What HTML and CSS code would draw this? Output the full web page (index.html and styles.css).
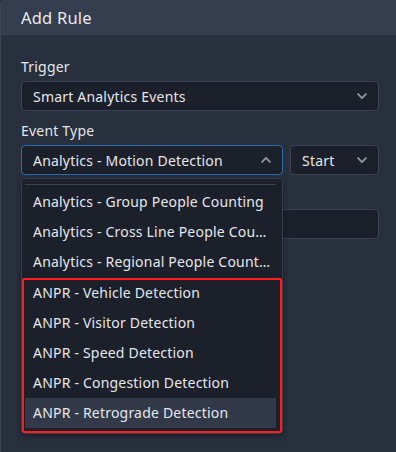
FILE: index.html
```html
<!DOCTYPE html>
<html lang="en">
<head>
  <meta charset="UTF-8" />
  <meta name="viewport" content="width=device-width, initial-scale=1.0" />
  <title>Add Rule</title>
  <link rel="stylesheet" href="styles.css">
</head>
<body>
  <div class="panel">
    <div class="panel-header">Add Rule</div>
    <div class="panel-body">
      <div class="field">
        <label class="field-label">Trigger</label>
        <div class="select">
          <span>Smart Analytics Events</span>
          <svg class="chevron" width="12" height="8" viewBox="0 0 12 8"><path d="M1.5 1.5 L6 6 L10.5 1.5" fill="none" stroke="#9aa2ae" stroke-width="1.6"/></svg>
        </div>
      </div>

      <div class="field">
        <label class="field-label">Event Type</label>
        <div class="select-row">
          <div class="select-wrap">
            <div class="select open">
              <span>Analytics - Motion Detection</span>
              <svg class="chevron" width="12" height="8" viewBox="0 0 12 8"><path d="M1.5 6.5 L6 2 L10.5 6.5" fill="none" stroke="#9aa2ae" stroke-width="1.6"/></svg>
            </div>
            <div class="dropdown">
              <div class="dropdown-list">
                <div class="option">Analytics - Group People Counting</div>
                <div class="option">Analytics - Cross Line People Counting</div>
                <div class="option">Analytics - Regional People Counting</div>
                <div class="option gap">ANPR - Vehicle Detection</div>
                <div class="option">ANPR - Visitor Detection</div>
                <div class="option">ANPR - Speed Detection</div>
                <div class="option">ANPR - Congestion Detection</div>
                <div class="option active">ANPR - Retrograde Detection</div>
              </div>
              <div class="highlight-box"></div>
            </div>
          </div>
          <div class="select small">
            <span>Start</span>
            <svg class="chevron" width="12" height="8" viewBox="0 0 12 8"><path d="M1.5 1.5 L6 6 L10.5 1.5" fill="none" stroke="#9aa2ae" stroke-width="1.6"/></svg>
          </div>
        </div>
      </div>

      <div class="field">
        <label class="field-label">&nbsp;</label>
        <input class="input" type="text" />
      </div>
    </div>
  </div>
</body>
</html>
```

FILE: styles.css
```css
body {
  margin: 0;
  font-family: 'Noto Sans', 'Open Sans', sans-serif;
  font-size: 14px;
  letter-spacing: 0.2px;
  color: #e4e7ec;
  background: #282f3d;
}

.panel {
  height: 452px;
  background: #282f3d;
  border-left: 1px solid #3a4352;
  border-top-left-radius: 4px;
  overflow: hidden;
}

.panel-header {
  height: 35px;
  line-height: 36px;
  padding-left: 20px;
  font-size: 16.5px;
  background: #343e4e;
  color: #e8ebef;
}

.panel-body {
  padding: 22px 17px 0 20px;
}

.field + .field {
  margin-top: 10px;
}

.field-label {
  display: block;
  height: 20px;
  line-height: 20px;
  margin-bottom: 4px;
}

.select {
  display: flex;
  align-items: center;
  justify-content: space-between;
  box-sizing: border-box;
  height: 30px;
  padding: 0 10px 0 11px;
  background: #1c202b;
  border: 1px solid #3c4454;
  border-radius: 4px;
}

.select.open {
  border-color: #2b6cb0;
}

.select-row {
  display: flex;
  gap: 7px;
}

.select-wrap {
  position: relative;
  width: 262px;
}

.select.small {
  flex: 1;
}

.chevron {
  flex: none;
}

.dropdown {
  position: absolute;
  top: 33px;
  left: 0;
  width: 262px;
  box-sizing: border-box;
  padding: 5px 6px 5px 3px;
  background: #1c202b;
  border: 1px solid #363e4c;
  border-radius: 4px;
  box-shadow: 0 2px 6px rgba(0, 0, 0, 0.35);
  z-index: 2;
}

.dropdown-list {
  border-top: 1px solid #3a4250;
  padding-top: 2px;
}

.option {
  height: 30px;
  line-height: 30px;
  padding: 0 4px 0 8px;
  white-space: nowrap;
  overflow: hidden;
  text-overflow: ellipsis;
}

.option.gap {
  margin-top: 1px;
}

.option.active {
  background: #323a4a;
}

.highlight-box {
  position: absolute;
  top: 99px;
  left: 0;
  width: 260px;
  height: 155px;
  box-sizing: border-box;
  border: 2px solid #ff1c1c;
  border-radius: 2px;
}

.input {
  display: block;
  width: 100%;
  box-sizing: border-box;
  height: 30px;
  background: #1c202b;
  border: 1px solid #3c4454;
  border-radius: 4px;
  outline: none;
}
```
